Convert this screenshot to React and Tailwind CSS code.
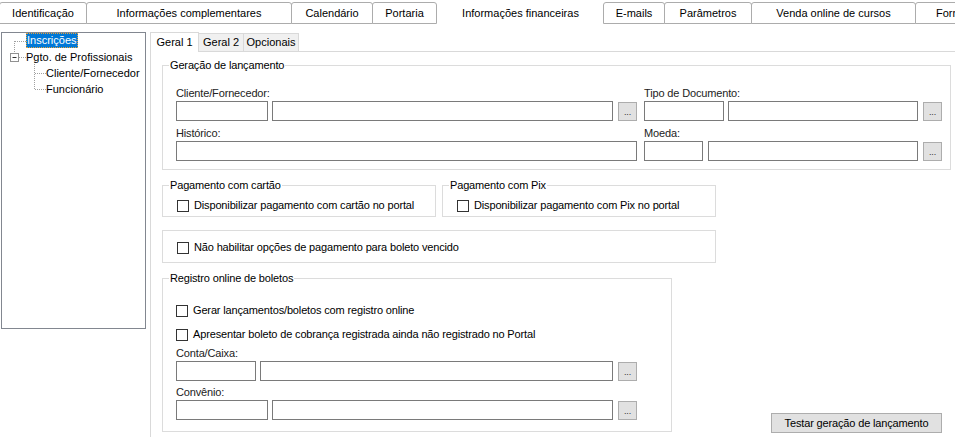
import React from 'react'

const topTabs = [
  ['Identificação', 87],
  ['Informações complementares', 205],
  ['Calendário', 81],
  ['Portaria', 64],
  ['Informações financeiras', 167, true],
  ['E-mails', 61],
  ['Parâmetros', 87],
  ['Venda online de cursos', 164],
  ['Formulários', 120],
]

const Box = ({ w }) => <div className={`h-[20px] border border-[#7a7a7a] bg-white shrink-0 ${w}`} />

const Dots = () => (
  <div className="w-[19px] h-[19px] mt-[1px] ml-[5px] shrink-0 border border-[#adadad] bg-[#e1e1e1] flex items-end justify-center pb-[3px] text-[9px] leading-none text-[#333]">
    ...
  </div>
)

const Label = ({ children, className = '' }) => (
  <div className={`h-[13px] leading-[13px] mb-[1px] text-[#222] ${className}`}>{children}</div>
)

const Check = ({ label, pl = 'pl-[14px]' }) => (
  <div className={`flex items-center h-[13px] ${pl}`}>
    <div className="w-[12px] h-[12px] border border-[#333] bg-white shrink-0" />
    <span className="ml-[5px] leading-[13px] whitespace-nowrap">{label}</span>
  </div>
)

const Group = ({ title, className = '', children }) => (
  <fieldset className={`border border-[#dcdcdc] ${className}`}>
    <legend className="ml-[6px] px-[1px] leading-[13px]">{title}</legend>
    {children}
  </fieldset>
)

const Tree = () => (
  <div className="relative ml-[1px] w-[145px] h-[297px] border border-[#828790] bg-white shrink-0">
    <svg className="absolute left-0 top-0" width="143" height="295">
      <g stroke="#a0a0a0" strokeDasharray="1 1" fill="none">
        <line x1="12.5" y1="8" x2="12.5" y2="19" />
        <line x1="13" y1="8.5" x2="24" y2="8.5" />
        <line x1="17" y1="24.5" x2="24" y2="24.5" />
        <line x1="32.5" y1="29" x2="32.5" y2="57" />
        <line x1="33" y1="40.5" x2="44" y2="40.5" />
        <line x1="33" y1="56.5" x2="44" y2="56.5" />
      </g>
      <rect x="8.5" y="20.5" width="8" height="8" fill="#fff" stroke="#919191" />
      <line x1="10.5" y1="24.5" x2="14.5" y2="24.5" stroke="#333" />
    </svg>
    <div className="relative">
      <div className="h-[16px] pl-[24px] flex">
        <span className="h-[15px] leading-[15px] px-[1px] bg-[#0078d7] text-white outline outline-1 outline-dotted outline-offset-[-1px] outline-[#e8a33c]">
          Inscrições
        </span>
      </div>
      <div className="h-[16px] leading-[16px] pl-[24px]">Pgto. de Profissionais</div>
      <div className="h-[16px] leading-[16px] pl-[44px]">Cliente/Fornecedor</div>
      <div className="h-[16px] leading-[16px] pl-[44px]">Funcionário</div>
    </div>
  </div>
)

export default function App() {
  return (
    <div className="w-[955px] h-[437px] overflow-hidden bg-white text-black text-[11px] leading-[13px] font-['Liberation_Sans',Arial,sans-serif]">
      {/* main tab strip */}
      <div className="flex items-end h-[24px] whitespace-nowrap">
        {topTabs.map(([name, w, sel], i) => {
          if (sel) {
            return (
              <div key={name} style={{ width: w }} className="h-[24px] pt-[2px] shrink-0 bg-white flex items-center justify-center">
                {name}
              </div>
            )
          }
          return (
            <div
              key={name}
              style={{ width: w + 1 }}
              className={`h-[22px] ml-[-1px] shrink-0 border border-[#acacac] rounded-t-[3px] bg-white flex items-center ${i === 8 ? 'pl-[20px]' : 'justify-center'}`}
            >
              {name}
            </div>
          )
        })}
      </div>

      <div className="flex pt-[8px]">
        <Tree />

        <div className="ml-[4px] flex-1 flex flex-col tracking-[-0.15px]">
          {/* inner tabs */}
          <div className="flex items-end h-[20px] tracking-normal">
            <div className="w-[49px] h-[20px] border-l border-t border-r border-[#d9d9d9] bg-white flex items-center justify-center shrink-0">Geral 1</div>
            <div className="w-[45px] h-[19px] border-t border-r border-b border-[#d9d9d9] bg-[#f0f0f0] flex items-center justify-center shrink-0">Geral 2</div>
            <div className="w-[55px] h-[19px] border-t border-r border-b border-[#d9d9d9] bg-[#f0f0f0] flex items-center justify-center shrink-0">Opcionais</div>
            <div className="flex-1 h-[19px] border-b border-[#d9d9d9]" />
          </div>

          <div className="border-l border-[#d9d9d9] h-[390px] pl-[11px] pt-[7px]">
            <Group title="Geração de lançamento" className="w-[789px]">
              <div className="pl-[13px] pt-[15px] pb-[8px] flex gap-x-[7px]">
                <div className="w-[461px]">
                  <Label>Cliente/Fornecedor:</Label>
                  <div className="flex">
                    <Box w="w-[92px]" />
                    <div className="ml-[4px]"><Box w="w-[341px]" /></div>
                    <Dots />
                  </div>
                  <Label className="mt-[6px]">Histórico:</Label>
                  <Box w="w-[461px]" />
                </div>
                <div className="w-[298px]">
                  <Label>Tipo de Documento:</Label>
                  <div className="flex">
                    <Box w="w-[80px]" />
                    <div className="ml-[4px]"><Box w="w-[190px]" /></div>
                    <Dots />
                  </div>
                  <Label className="mt-[6px]">Moeda:</Label>
                  <div className="flex">
                    <Box w="w-[59px]" />
                    <div className="ml-[5px]"><Box w="w-[210px]" /></div>
                    <Dots />
                  </div>
                </div>
              </div>
            </Group>

            <div className="flex mt-[9px]">
              <Group title="Pagamento com cartão" className="w-[274px]">
                <div className="pt-[7px] pb-[4px]">
                  <Check label="Disponibilizar pagamento com cartão no portal" />
                </div>
              </Group>
              <Group title="Pagamento com Pix" className="w-[274px] ml-[6px]">
                <div className="pt-[7px] pb-[4px]">
                  <Check label="Disponibilizar pagamento com Pix no portal" />
                </div>
              </Group>
            </div>

            <div className="w-[554px] mt-[13px] border border-[#dcdcdc] pt-[10px] pb-[8px]">
              <Check label="Não habilitar opções de pagamento para boleto vencido" />
            </div>

            <div className="flex items-end mt-[9px]">
              <Group title="Registro online de boletos" className="w-[510px]">
                <div className="pl-[13px] pt-[19px] pb-[11px]">
                  <Check pl="pl-0" label="Gerar lançamentos/boletos com registro online" />
                  <div className="mt-[11px]">
                    <Check pl="pl-0" label="Apresentar boleto de cobrança registrada ainda não registrado no Portal" />
                  </div>
                  <Label className="mt-[6px]">Conta/Caixa:</Label>
                  <div className="flex">
                    <Box w="w-[80px]" />
                    <div className="ml-[4px]"><Box w="w-[353px]" /></div>
                    <Dots />
                  </div>
                  <Label className="mt-[5px]">Convênio:</Label>
                  <div className="flex">
                    <Box w="w-[92px]" />
                    <div className="ml-[4px]"><Box w="w-[341px]" /></div>
                    <Dots />
                  </div>
                </div>
              </Group>
              <button className="ml-[99px] mb-[-1px] w-[171px] h-[20px] border border-[#adadad] bg-[#e1e1e1] text-[11px] leading-[13px] tracking-[-0.15px] font-['Liberation_Sans',Arial,sans-serif]">
                Testar geração de lançamento
              </button>
            </div>
          </div>
        </div>
      </div>
    </div>
  )
}
